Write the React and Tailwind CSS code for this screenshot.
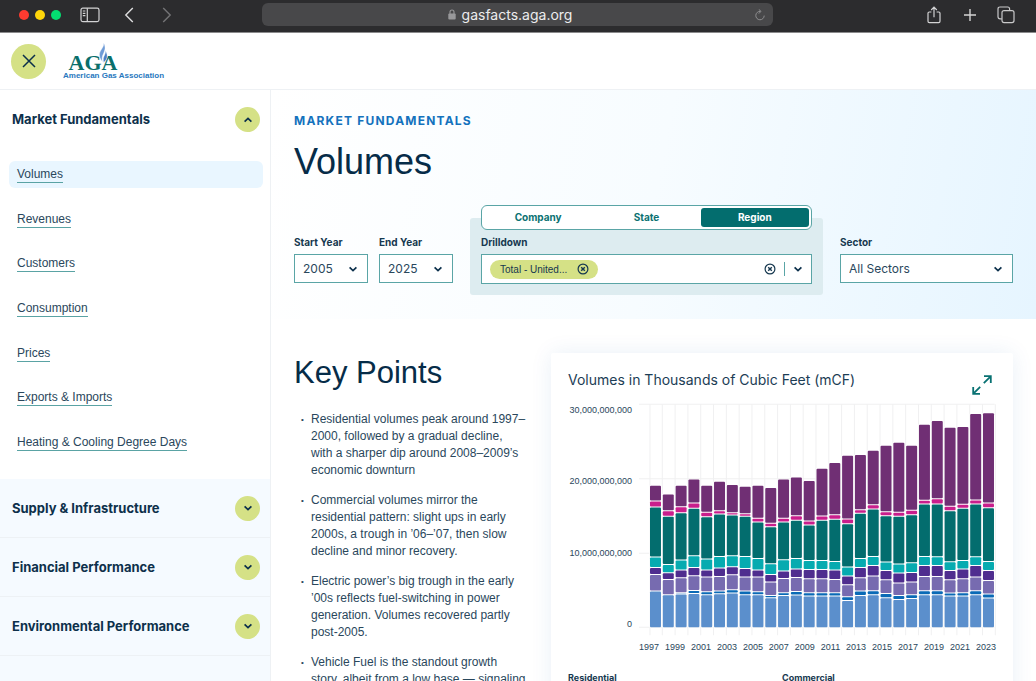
import React from "react";

const YEARS = [
  [408, 455, 473, 623, 654, 675, 725, 725],
  [434, 484, 501, 645, 670, 690, 736, 736],
  [408, 472, 490, 632, 662, 685, 730, 734],
  [389, 461, 477, 619, 654, 679, 723, 732],
  [408, 489, 502, 629, 662, 683, 727, 736],
  [396, 484, 494, 621, 656, 681, 725, 733],
  [406, 490, 497, 619, 652, 676, 721, 731],
  [411, 493, 501, 621, 657, 683, 725, 736],
  [408, 507, 518, 627, 662, 683, 727, 736],
  [415, 522, 532, 643, 675, 698, 738, 745],
  [389, 507, 518, 631, 665, 687, 730, 738],
  [383, 499, 513, 627, 659, 684, 726, 737],
  [394, 515, 527, 633, 660, 688, 730, 740],
  [357, 500, 513, 633, 660, 688, 730, 740],
  [340, 496, 510, 636, 662, 690, 730, 740],
  [318, 509, 523, 653, 680, 706, 742, 753],
  [316, 481, 492, 627, 654, 685, 725, 738],
  [303, 466, 479, 621, 648, 680, 724, 736],
  [288, 487, 499, 638, 663, 691, 732, 745],
  [279, 489, 501, 644, 671, 701, 738, 750],
  [288, 483, 496, 640, 669, 698, 736, 747],
  [225, 453, 464, 621, 648, 681, 724, 736],
  [214, 448, 464, 622, 648, 681, 724, 736],
  [234, 471, 484, 637, 663, 691, 731, 740],
  [232, 465, 477, 633, 659, 688, 730, 740],
  [193, 452, 464, 622, 648, 683, 724, 736],
  [191, 461, 475, 636, 663, 693, 734, 746],
];
const SERIES = ["#702f74", "#c91e8c", "#036d6e", "#06abb0", "#4f2d8f", "#776bb0", "#0a6ab6", "#5b8fcc"];
const GRID_TOP = 164;
const BASE = 832;

function Chevron({ up = false, className = "" }) {
  return (
    <svg viewBox="0 0 10 10" className={`h-[10px] w-[10px] shrink-0 ${className}`} fill="none" stroke="#0b2f4b" strokeWidth="1.7">
      <path d={up ? "M1.6 6.6 5 3.4 8.4 6.6" : "M1.6 3.4 5 6.6 8.4 3.4"} />
    </svg>
  );
}

function CircleX() {
  return (
    <svg viewBox="0 0 12 12" className="h-3 w-3" fill="none" stroke="#16384f" strokeWidth="1.2">
      <circle cx="6" cy="6" r="4.9" />
      <path d="M4.2 4.2 7.8 7.8M7.8 4.2 4.2 7.8" strokeWidth="1.4" />
    </svg>
  );
}

function BrowserBar() {
  return (
    <div className="flex h-[33px] shrink-0 items-center border-b border-[#8b8b8c] bg-[#2c2c2e] pb-[3px]">
      <div className="flex flex-1 items-center pl-[19px]">
        <div className="flex gap-[6px]">
          <span className="h-[10px] w-[10px] rounded-full bg-[#ff3b30]" />
          <span className="h-[10px] w-[10px] rounded-full bg-[#ffd60a]" />
          <span className="h-[10px] w-[10px] rounded-full bg-[#04de71]" />
        </div>
        <button aria-label="Sidebar" className="ml-[19px]">
          <svg viewBox="0 0 20 16" className="h-4 w-5" fill="none" stroke="#d3d3d4" strokeWidth="1.2">
            <rect x="1" y="1.2" width="18" height="13.4" rx="1.8" />
            <path d="M7.3 1.2v13.4M2.8 4h2.6M2.8 6.3h2.6M2.8 8.6h2.6" />
          </svg>
        </button>
        <button aria-label="Back" className="ml-6">
          <svg viewBox="0 0 10 16" className="h-4 w-[10px]" fill="none" stroke="#dededf" strokeWidth="1.4">
            <path d="M8.8 1 1.8 8l7 7" />
          </svg>
        </button>
        <button aria-label="Forward" className="ml-7">
          <svg viewBox="0 0 10 16" className="h-4 w-[10px]" fill="none" stroke="#747476" strokeWidth="1.4">
            <path d="M1.2 1l7 7-7 7" />
          </svg>
        </button>
      </div>
      <div className="flex h-[23px] w-[511px] items-center rounded-md bg-[#48484a] px-2">
        <span className="flex flex-1 items-center justify-center gap-[6px] pr-1 font-[Inter] text-sm text-[#ececed]">
          <svg viewBox="0 0 8 11" className="h-[11px] w-2" fill="#98989a">
            <rect x="0.3" y="4.6" width="7.4" height="6" rx="1" />
            <path d="M2 5V3a2 2 0 0 1 4 0v2" fill="none" stroke="#98989a" strokeWidth="1.1" />
          </svg>
          gasfacts.aga.org
        </span>
        <button aria-label="Reload">
          <svg viewBox="0 0 10 12" className="h-3 w-[10px]" fill="none" stroke="#8e8e90" strokeWidth="1">
            <path d="M5.4 2.4A4.2 4.2 0 1 0 9.2 6.6M3.8.4l2.2 2-2.2 2.2" />
          </svg>
        </button>
      </div>
      <div className="flex flex-1 items-center justify-end pr-[21px]">
        <button aria-label="Share">
          <svg viewBox="0 0 14 18" className="h-[18px] w-[14px]" fill="none" stroke="#d3d3d4" strokeWidth="1.2">
            <path d="M4.4 6H2.3C1.4 6 1 6.4 1 7.3v8c0 .9.4 1.3 1.3 1.3h9.4c.9 0 1.3-.4 1.3-1.3v-8c0-.9-.4-1.3-1.3-1.3H9.600M7 11.200V1.200M4.200 4 7 1.200 9.800 4" />
          </svg>
        </button>
        <button aria-label="New tab" className="ml-[22px]">
          <svg viewBox="0 0 14 14" className="h-[14px] w-[14px]" stroke="#d3d3d4" strokeWidth="1.4">
            <path d="M7 1v12M1 7h12" />
          </svg>
        </button>
        <button aria-label="Tabs" className="ml-5">
          <svg viewBox="0 0 18 18" className="h-[18px] w-[18px]" fill="none" stroke="#c9c9ca" strokeWidth="1.2">
            <rect x="5" y="4.600" width="12" height="12" rx="2" />
            <path d="M4.800 12.800H3c-1.300 0-2-.7-2-2V3c0-1.300.7-2 2-2h7.600c1.300 0 2 .7 2 2v1.400" />
          </svg>
        </button>
      </div>
    </div>
  );
}

function Logo() {
  return (
    <a href="#home" aria-label="American Gas Association" className="block">
      <svg viewBox="0 0 104 38" className="h-[38px] w-[104px]">
        <text x="30" y="28" textAnchor="middle" fontFamily="Liberation Serif" fontWeight="700" fontSize="22" fill="#0a6f6b">AGA</text>
        <path d="M40.600 1c.9 4.600-5 7.600-4.100 13 .4 2.200 1.600 4.200 3.100 6-.9-3.300-.5-5.600.9-8.500C42.200 8.200 42.900 4.500 40.600 1Z" fill="#6f9bd6" stroke="#fff" strokeWidth=".4" />
        <path d="M42.300 8.400c.8 3.300-1.700 5.500-2 8.300-.1 1.300.1 2.500.4 3.700 1.900-1.700 3.600-3.800 3.500-6.500-.1-2.100-.9-3.900-1.900-5.500Z" fill="#4a7fc6" stroke="#fff" strokeWidth=".4" />
        <text x="0" y="36" fontFamily="Liberation Sans" fontWeight="700" fontSize="8" fill="#2878be">American Gas Association</text>
      </svg>
    </a>
  );
}

const LINKS = ["Volumes", "Revenues", "Customers", "Consumption", "Prices", "Exports & Imports", "Heating & Cooling Degree Days"];

function SectionHead({ label, open = false }) {
  return (
    <div className={`flex h-[59px] items-center justify-between pr-[10px] pl-3 ${open ? "" : "border-b border-[#edf1f5]"}`}>
      <h2 className="pt-px font-[Inter] text-[13px] font-bold text-[#0d304b]">{label}</h2>
      <button aria-label={label} aria-expanded={open} className="flex h-[25px] w-[25px] items-center justify-center rounded-full bg-[#d5e186]">
        <Chevron up={open} />
      </button>
    </div>
  );
}

function Sidebar() {
  return (
    <aside className="flex w-[271px] shrink-0 flex-col border-r border-[#eef1f4] bg-[#f5faff]">
      <div className="bg-white pb-[23px]">
        <SectionHead label="Market Fundamentals" open />
        <nav className="mt-3 flex h-[295px] flex-col justify-between pr-[7px] pl-[9px]">
          {LINKS.map((l, i) => (
            <a key={l} href="#link" className={`flex h-[27px] items-center rounded-md px-2 text-xs text-[#2a475c] ${i === 0 ? "bg-[#e9f6ff]" : ""}`}>
              <span className="border-b border-[#5aa3a4] leading-4">{l}</span>
            </a>
          ))}
        </nav>
      </div>
      <SectionHead label="Supply & Infrastructure" />
      <SectionHead label="Financial Performance" />
      <SectionHead label="Environmental Performance" />
    </aside>
  );
}

function SelectField({ id, label, value, className }) {
  return (
    <div className={`flex flex-col gap-1 font-[Inter] ${className}`}>
      <label htmlFor={id} className="text-[10px] leading-4 font-bold text-[#16384f]">{label}</label>
      <div className="relative">
        <select id={id} defaultValue={value} className="h-[29px] w-full appearance-none border border-[#5aa5a6] bg-white pl-2 text-xs text-[#2a475c]">
          <option>{value}</option>
        </select>
        <Chevron className="pointer-events-none absolute top-[10px] right-[10px]" />
      </div>
    </div>
  );
}

function Drilldown() {
  return (
    <div className="relative w-[353px] rounded-[3px] bg-[#ddecf0] px-[11px] pt-4 pb-[11px] font-[Inter]">
      <div role="tablist" className="absolute inset-x-[11px] -top-[13px] grid h-[25px] grid-cols-3 rounded-md border border-[#5aa5a6] bg-white p-[2px] text-[10px] font-bold text-[#0b7272]">
        <button role="tab">Company</button>
        <button role="tab">State</button>
        <button role="tab" aria-selected="true" className="rounded-[3px] bg-[#036d6e] text-white">Region</button>
      </div>
      <div className="flex flex-col gap-1">
        <label htmlFor="drill" className="text-[10px] leading-4 font-bold text-[#16384f]">Drilldown</label>
        <div className="flex h-[30px] items-center border border-[#5aa5a6] bg-white px-2">
          <span className="flex h-[19px] shrink-0 items-center gap-[10px] rounded-full bg-[#d5e186] pr-[9px] pl-[10px] font-[Liberation_Sans] text-[10px] text-[#16384f]">
            Total - United...
            <button aria-label="Remove"><CircleX /></button>
          </span>
          <input id="drill" className="w-10 min-w-0 flex-1 outline-none" />
          <button aria-label="Clear"><CircleX /></button>
          <span className="mx-2 h-[14px] w-px bg-[#5aa5a6]" />
          <button aria-label="Open"><Chevron /></button>
        </div>
      </div>
    </div>
  );
}

function Hero() {
  return (
    <section className="h-[229px] bg-linear-[100deg] from-white via-[#f7fcff] to-[#e6f5ff] px-[23px] pt-[22px]">
      <p className="font-[Inter] text-xs leading-[18px] font-bold tracking-widest text-[#1472bd]">MARKET FUNDAMENTALS</p>
      <h1 className="mt-[10px] text-4xl leading-[44px] text-[#062c48]">Volumes</h1>
      <div className="mt-[34px] flex items-start">
        <SelectField id="start" label="Start Year" value="2005" className="mt-4 w-[74px]" />
        <SelectField id="end" label="End Year" value="2025" className="mt-4 ml-[11px] w-[74px]" />
        <div className="ml-[17px]"><Drilldown /></div>
        <SelectField id="sector" label="Sector" value="All Sectors" className="mt-4 ml-[17px] flex-1" />
      </div>
    </section>
  );
}

const POINTS = [
  ["Residential volumes peak around 1997–", "2000, followed by a gradual decline,", "with a sharper dip around 2008–2009’s", "economic downturn"],
  ["Commercial volumes mirror the", "residential pattern: slight ups in early", "2000s, a trough in ’06–’07, then slow", "decline and minor recovery."],
  ["Electric power’s big trough in the early", "’00s reflects fuel-switching in power", "generation. Volumes recovered partly", "post-2005."],
  ["Vehicle Fuel is the standout growth", "story, albeit from a low base — signaling"],
];

function Chart() {
  const pitch = 38.46;
  return (
    <div className="mt-2 flex">
      <div className="flex h-[228px] w-[71px] shrink-0 flex-col justify-between pr-[7px] text-right text-[9px] leading-[14px] text-[#2a475c]">
        <span>30,000,000,000</span>
        <span>20,000,000,000</span>
        <span>10,000,000,000</span>
        <span>0</span>
      </div>
      <div className="min-w-0 flex-1">
        <svg viewBox="270 160 1072 698" preserveAspectRatio="none" className="block h-[233px] w-full">
          <g stroke="#f0f0f1" strokeWidth="3">
            {[GRID_TOP, 387, 610, BASE].map((y) => <path key={y} d={`M270 ${y}H1338`} />)}
            {Array.from({ length: 28 }, (_, i) => <path key={i} d={`M${303 + i * pitch - (i ? 1.5 : 0)} ${GRID_TOP}V856`} />)}
          </g>
          {YEARS.map((tops, i) => (
            <g key={i}>
              <rect x={301 + i * pitch} y={tops[0] - 1} width="37" height={BASE - tops[0] + 1} fill="#fff" />
              {tops.map((y, s) => {
                const end = s === 7 ? BASE : tops[s + 1] - 3;
                return end > y ? (
                  <rect key={s} x={303 + i * pitch} y={y} width="33" height={end - y} rx="3" fill={SERIES[s]} />
                ) : null;
              })}
            </g>
          ))}
        </svg>
        <div className="mt-1 flex justify-between text-[9px] leading-[14px] text-[#2a475c]">
          {Array.from({ length: 14 }, (_, i) => <span key={i}>{1997 + i * 2}</span>)}
        </div>
      </div>
    </div>
  );
}

export default function App() {
  return (
    <div className="flex h-screen flex-col overflow-hidden bg-white font-[Liberation_Sans,sans-serif]">
      <BrowserBar />
      <header className="flex h-[57px] shrink-0 items-center gap-[17px] border-b border-[#eef1f4] pl-[11px]">
        <button aria-label="Close menu" className="flex h-[35px] w-[35px] items-center justify-center rounded-full bg-[#d5e186]">
          <svg viewBox="0 0 14 14" className="h-[14px] w-[14px]" stroke="#0b2f4b" strokeWidth="1.5">
            <path d="M1 1l12 12M13 1 1 13" />
          </svg>
        </button>
        <Logo />
      </header>
      <div className="flex min-h-0 flex-1">
        <Sidebar />
        <main className="min-w-0 flex-1 overflow-hidden">
          <Hero />
          <div className="grid grid-cols-[minmax(0,1fr)_minmax(0,2fr)] gap-[26px] px-[23px] pt-[34px]">
            <section>
              <h2 className="text-[31px] leading-[40px] whitespace-nowrap text-[#062c48]">Key Points</h2>
              <ul className="mt-[18px] flex flex-col gap-[13px] text-xs leading-[17px] text-[#2a475c]">
                {POINTS.map((p) => (
                  <li key={p[0]} className="flex whitespace-nowrap">
                    <span className="w-[17px] shrink-0 pl-[7px] text-[8px]">•</span>
                    <p>{p.map((line) => <React.Fragment key={line}>{line}<br /></React.Fragment>)}</p>
                  </li>
                ))}
              </ul>
            </section>
            <section className="h-[420px] rounded-[2px] bg-white px-[17px] pt-[18px] shadow-[0_0_22px_rgba(0,90,170,0.09)]">
              <div className="flex h-[24px] justify-between">
                <h3 className="font-[Inter] text-sm leading-[18px] text-[#1c3d55]">Volumes in Thousands of Cubic Feet (mCF)</h3>
                <button aria-label="Expand" className="mt-1 mr-1 h-5">
                  <svg viewBox="0 0 20 20" className="h-5 w-5" fill="none" stroke="#087172" strokeWidth="1.8">
                    <path d="M12 1.200h6.800V8M18.400 1.600l-6.600 6.600M8 18.800H1.200V12M1.600 18.400l6.600-6.600" />
                  </svg>
                </button>
              </div>
              <Chart />
              <div className="mt-[17px] grid grid-cols-2 font-[Inter] text-[9px] leading-[14px] font-bold text-[#16384f]">
                <span>Residential</span>
                <span>Commercial</span>
              </div>
            </section>
          </div>
        </main>
      </div>
    </div>
  );
}
